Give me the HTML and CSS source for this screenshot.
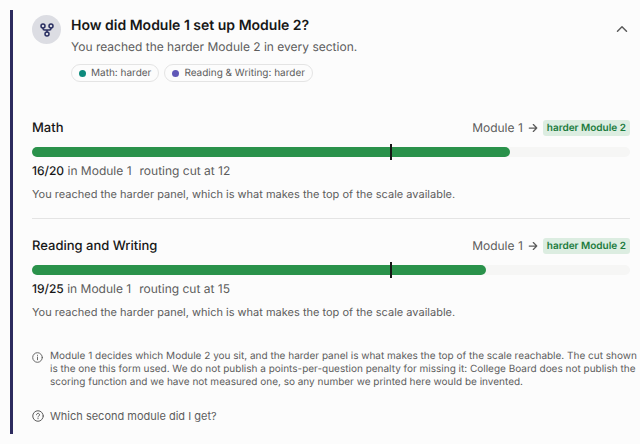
FILE: index.html
```html
<!DOCTYPE html>
<html lang="en">
<head>
<meta charset="utf-8">
<meta name="viewport" content="width=device-width, initial-scale=1">
<title>Module routing</title>
<link rel="stylesheet" href="styles.css">
</head>
<body>
<main class="panel">
  <header class="header">
    <span class="badge">
      <svg class="fork" viewBox="0 0 28 28" aria-hidden="true"><circle cx="14" cy="22" r="4"/><circle cx="6" cy="6" r="4"/><circle cx="22" cy="6" r="4"/><path d="M22 10v1c0 2-1 3-3 3H9c-2 0-3-1-3-3v-1M14 14v4"/></svg>
    </span>
    <div class="intro">
      <h1 class="title">How did Module 1 set up Module 2?</h1>
      <p class="subtitle">You reached the harder Module 2 in every section.</p>
      <ul class="chips">
        <li class="chip"><span class="dot dot-math"></span>Math: harder</li>
        <li class="chip"><span class="dot dot-reading"></span>Reading &amp; Writing: harder</li>
      </ul>
    </div>
    <button class="toggle" type="button" aria-label="Collapse" aria-expanded="true">
      <svg class="chevron" viewBox="0 0 16 16" aria-hidden="true"><path d="M2 11l6-6 6 6"/></svg>
    </button>
  </header>

  <section class="section">
    <div class="section-head">
      <h2 class="name">Math</h2>
      <div class="route">Module 1
        <svg class="arrow" viewBox="0 0 16 16" aria-hidden="true"><path d="M2 8h12M8.500 2.500L14 8l-5.500 5.500"/></svg>
        <span class="tag">harder Module 2</span>
      </div>
    </div>
    <div class="track"><div class="fill" style="width:80%"></div><span class="cut" style="left:60%"></span></div>
    <p class="score"><span><strong>16/20</strong> in Module 1</span><span>routing cut at 12</span></p>
    <p class="detail">You reached the harder panel, which is what makes the top of the scale available.</p>
  </section>

  <section class="section">
    <div class="section-head">
      <h2 class="name">Reading and Writing</h2>
      <div class="route">Module 1
        <svg class="arrow" viewBox="0 0 16 16" aria-hidden="true"><path d="M2 8h12M8.500 2.500L14 8l-5.500 5.500"/></svg>
        <span class="tag">harder Module 2</span>
      </div>
    </div>
    <div class="track"><div class="fill" style="width:76%"></div><span class="cut" style="left:60%"></span></div>
    <p class="score"><span><strong>19/25</strong> in Module 1</span><span>routing cut at 15</span></p>
    <p class="detail">You reached the harder panel, which is what makes the top of the scale available.</p>
  </section>

  <div class="note">
    <svg class="info" viewBox="0 0 24 24" aria-hidden="true"><circle cx="12" cy="12" r="10.500"/><path d="M12 11v6M12 7v.500"/></svg>
    <p class="note-text">Module 1 decides which Module 2 you sit, and the harder panel is what makes the top of the scale reachable. The cut shown is the one this form used. We do not publish a points-per-question penalty for missing it: College Board does not publish the scoring function and we have not measured one, so any number we printed here would be invented.</p>
  </div>

  <button class="question" type="button">
    <svg class="help" viewBox="0 0 24 24" aria-hidden="true"><circle cx="12" cy="12" r="10.500"/><path d="M9 9.500a3 3 0 1 1 4.500 2.600c-1 .6-1.500 1-1.500 2M12 17v.500"/></svg>
    Which second module did I get?
  </button>
</main>
</body>
</html>
```
FILE: styles.css
```css
* { box-sizing: border-box; }
body {
  margin: 0;
  padding: 10px;
  background: #fcfcfc;
  color: #5c5c5c;
  font: 12px/16px Inter, sans-serif;
  text-rendering: geometricPrecision;
}
h1, h2, p, ul { margin: 0; padding: 0; }
svg { fill: none; stroke: currentColor; stroke-linecap: round; stroke-linejoin: round; flex: none; }
button { padding: 0; border: 0; background: none; color: inherit; font: inherit; cursor: pointer; }

.panel { border-left: 3px solid #2d2b5e; padding: 5px 0 10px 19px; }

.header { display: flex; align-items: flex-start; gap: 10px; margin-bottom: 37px; }
.badge {
  display: flex; align-items: center; justify-content: center; flex: none;
  width: 29px; height: 29px; border-radius: 50%;
  background: #dcdde3; color: #2a2f62;
}
.fork { width: 14px; height: 14px; stroke-width: 3; }
.intro { flex: 1; }
.title { color: #171717; font-size: 14px; line-height: 22px; font-weight: 600; }
.subtitle { line-height: 20px; }
.chips { display: flex; flex-wrap: wrap; gap: 5px; margin-top: 7px; list-style: none; }
.chip {
  display: flex; align-items: center; gap: 5px;
  height: 18px; padding: 0 7px;
  border: 1px solid #e4e4e4; border-radius: 9px;
  font-size: 10px;
}
.dot { width: 7px; height: 7px; border-radius: 50%; }
.dot-math { background: #0d8a7c; }
.dot-reading { background: #6058b8; }
.toggle { display: flex; margin: 8px 2px 0 0; }
.chevron { width: 12px; height: 12px; stroke-width: 2; }

.section + .section { margin-top: 16px; padding-top: 18px; border-top: 1px solid #e4e4e4; }
.section-head { display: flex; align-items: center; justify-content: space-between; height: 18px; }
.name { color: #171717; font-size: 13px; font-weight: 500; }
.route { display: flex; align-items: center; gap: 5px; }
.arrow { width: 10px; height: 10px; stroke-width: 2; }
.tag {
  padding: 0 4px; border-radius: 3px;
  background: #dcede1; color: #1b7b3d;
  font-size: 10px; font-weight: 600;
}
.track { position: relative; height: 10px; margin-top: 10px; border-radius: 5px; background: #f6f6f5; }
.fill { height: 100%; border-radius: 5px; background: #2a924b; }
.cut { position: absolute; top: -3px; width: 2px; height: 16px; margin-left: -1px; background: #171717; }
.score { display: flex; gap: 8px; margin-top: 6px; }
.score strong { color: #171717; font-weight: 500; }
.detail { margin-top: 7px; font-size: 11px; }

.note { display: flex; gap: 7px; margin: 30px -8px 0 0; font-size: 10px; line-height: 13px; }
.info { width: 11px; height: 11px; margin-top: 2px; stroke-width: 2; }
.question { display: flex; align-items: center; gap: 6px; margin-top: 19px; font-size: 11px; }
.help { width: 12px; height: 12px; stroke-width: 2; }
```
